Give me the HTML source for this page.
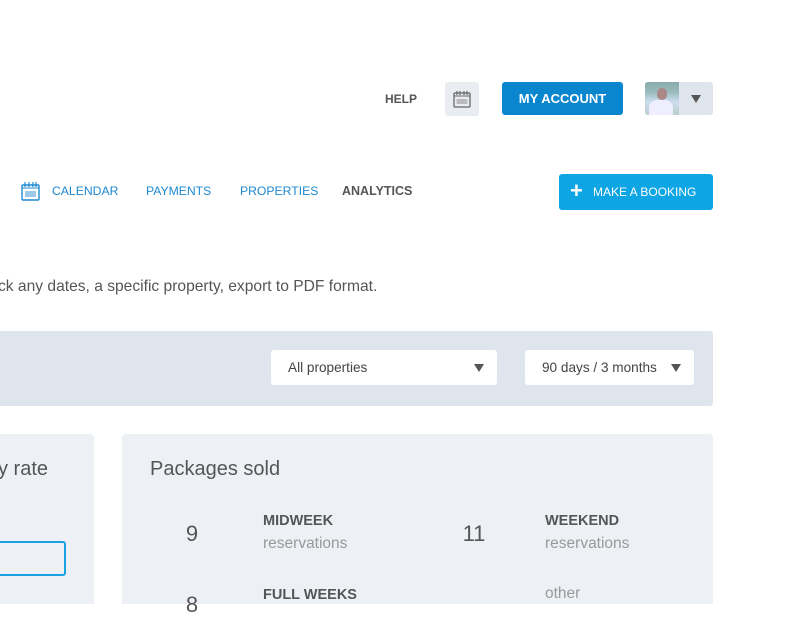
<!DOCTYPE html>
<html><head><meta charset="utf-8"><style>
*{margin:0;padding:0;box-sizing:border-box}
body{width:800px;height:600px;overflow:hidden;background:#fff;font-family:"Liberation Sans",sans-serif;position:relative}
.a{position:absolute}
.nav{color:#1e88d0;font-size:12.2px;top:184px}
.sel{background:#fff;border-radius:3px;height:35px;top:350px;font-size:13.6px;color:#444;line-height:35px;padding-left:17px}
.tri{position:absolute;width:0;height:0;border-left:5px solid transparent;border-right:5px solid transparent;border-top:8px solid #555;top:14px}
.num{font-size:22px;color:#555;width:40px;text-align:center}
.lbl{font-size:14.5px;font-weight:bold;color:#555}
.sub{font-size:15.5px;color:#999}
</style></head><body>
<div class="a" style="left:385px;top:92px;font-size:12px;font-weight:bold;color:#555">HELP</div>
<div class="a" style="left:445px;top:82px;width:34px;height:34px;background:#e9edf2;border-radius:3px">
<svg width="34" height="34" viewBox="0 0 34 34"><rect x="9" y="11" width="16" height="14" rx="1" fill="none" stroke="#666" stroke-width="1.3"/><line x1="9" y1="14" x2="25" y2="14" stroke="#666"/><path d="M12 9v4M15 9v4M19 9v4M22 9v4" stroke="#666" stroke-width="1.2"/><rect x="11.5" y="17" width="11" height="5" fill="#bbb"/></svg></div>
<div class="a" style="left:502px;top:82px;width:121px;height:33px;background:#0a86cf;border-radius:3px;color:#fff;font-size:13px;font-weight:bold;text-align:center;line-height:33px">MY ACCOUNT</div>
<div class="a" style="left:645px;top:82px;width:68px;height:33px;background:#dfe5ec;border-radius:3px;overflow:hidden">
<div class="a" style="left:0;top:0;width:34px;height:33px;background:linear-gradient(#8aa 0,#9bb 30%,#cde 60%,#bcc 100%)"><div class="a" style="left:12px;top:6px;width:10px;height:12px;border-radius:5px;background:#a88"></div><div class="a" style="left:4px;top:18px;width:24px;height:15px;border-radius:8px 8px 0 0;background:#eef"></div></div>
<div class="tri" style="left:46px;top:13px"></div></div>
<svg class="a" style="left:21px;top:181px" width="19" height="20" viewBox="0 0 19 20"><rect x="1" y="4" width="17" height="15" rx="1" fill="none" stroke="#1e88d0" stroke-width="1.4"/><line x1="1" y1="7" x2="18" y2="7" stroke="#1e88d0"/><path d="M4 1v5M8 1v5M12 1v5M15 1v5" stroke="#1e88d0" stroke-width="1.2"/><rect x="4" y="10" width="11" height="6" fill="#9cc8ea"/></svg>
<div class="a nav" style="left:52px">CALENDAR</div>
<div class="a nav" style="left:146px">PAYMENTS</div>
<div class="a nav" style="left:240px">PROPERTIES</div>
<div class="a nav" style="left:342px;color:#555;font-weight:bold;font-size:12.5px">ANALYTICS</div>
<div class="a" style="left:559px;top:174px;width:154px;height:36px;background:#0ea5e4;border-radius:3px;color:#fff;font-size:12px;line-height:36px"><span style="position:absolute;left:11px;top:-1px;font-size:22px;font-weight:bold">+</span><span style="position:absolute;left:34px">MAKE A BOOKING</span></div>
<div class="a" style="left:-2px;top:278px;font-size:15.6px;color:#555;white-space:nowrap">ck any dates, a specific property, export to PDF format.</div>
<div class="a" style="left:0;top:331px;width:713px;height:75px;background:#dfe5ec;border-radius:0 3px 3px 0"></div>
<div class="a sel" style="left:271px;width:226px">All properties<div class="tri" style="left:203px"></div></div>
<div class="a sel" style="left:525px;width:169px">90 days / 3 months<div class="tri" style="left:146px"></div></div>
<div class="a" style="left:0;top:434px;width:94px;height:170px;background:#edf0f4;border-radius:0 4px 0 0"></div>
<div class="a" style="left:-2px;top:458px;font-size:20px;color:#555">y rate</div>
<div class="a" style="left:-4px;top:541px;width:70px;height:35px;border:2px solid #1aa3e3;border-radius:3px"></div>
<div class="a" style="left:122px;top:434px;width:591px;height:170px;background:#edf0f4;border-radius:4px 4px 0 0"></div>
<div class="a" style="left:150px;top:458px;font-size:20px;color:#555">Packages sold</div>
<div class="a num" style="left:172px;top:521px">9</div>
<div class="a lbl" style="left:263px;top:513px">MIDWEEK</div>
<div class="a sub" style="left:263px;top:535px">reservations</div>
<div class="a num" style="left:454px;top:521px">11</div>
<div class="a lbl" style="left:545px;top:513px">WEEKEND</div>
<div class="a sub" style="left:545px;top:535px">reservations</div>
<div class="a num" style="left:172px;top:592px">8</div>
<div class="a lbl" style="left:263px;top:587px">FULL WEEKS</div>
<div class="a sub" style="left:545px;top:585px">other</div>
</body></html>
